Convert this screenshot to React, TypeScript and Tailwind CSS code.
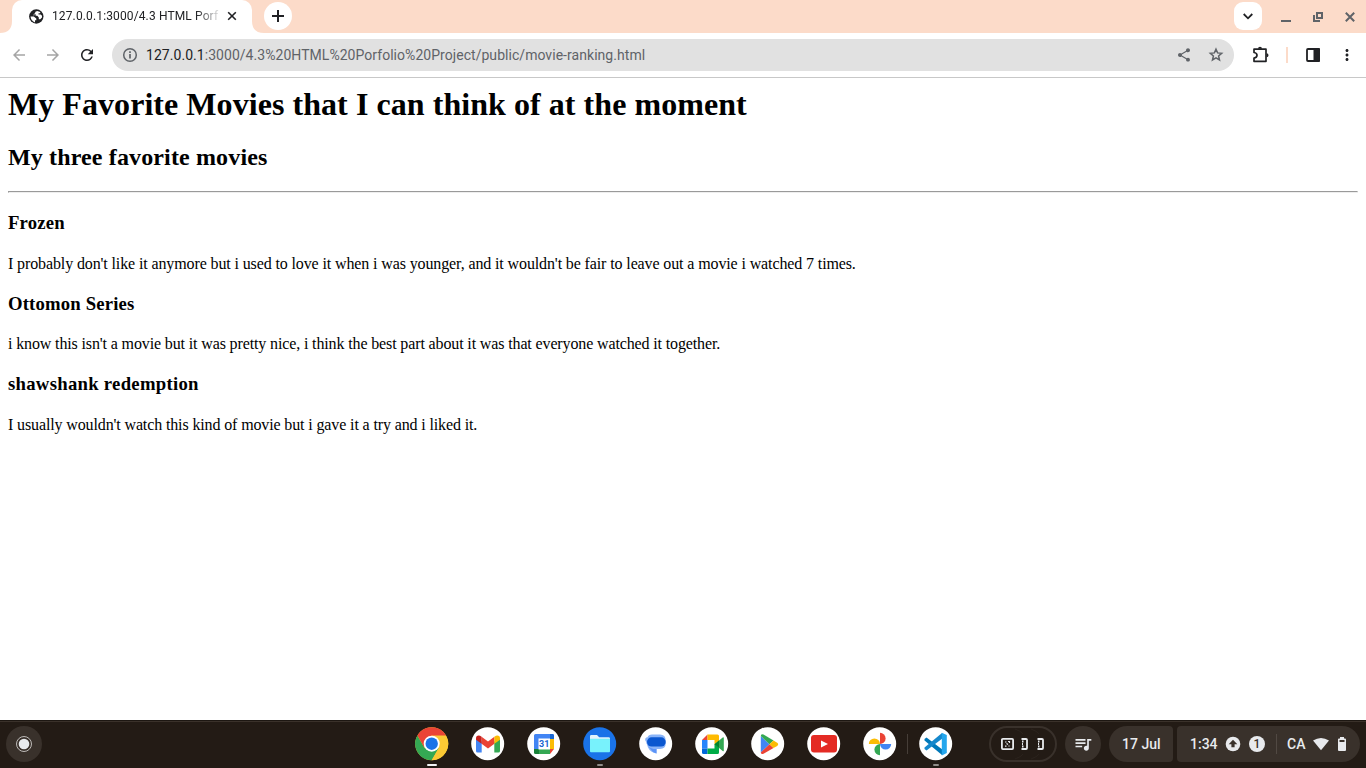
import React from "react";
import { MdArrowBack, MdArrowForward, MdRefresh, MdShare, MdMoreVert, MdQueueMusic } from "react-icons/md";

const Disc = ({ bg = "#fff", children }: { bg?: string; children: React.ReactNode }) => (
  <svg width="34" height="34" viewBox="0 0 34 34">
    <circle cx="16.700" cy="16.700" r="16.500" fill={bg} />
    {children}
  </svg>
);

const Chrome = () => (
  <Disc bg="#fbc934">
    <path d="M2.4 8.45A16.5 16.5 0 0 0 16.700 33.2L23.900 20.800 16.700 16.700 9.500 20.800Z" fill="#34a853" />
    <path d="M16.700 8.450H31A16.5 16.5 0 0 1 16.700 33.200L23.900 20.800Z" fill="#fbc934" />
    <path d="M2.4 8.450A16.5 16.5 0 0 1 31 8.450H16.700L9.500 20.800Z" fill="#ea4335" />
    <circle cx="16.700" cy="16.700" r="8" fill="#fff" />
    <circle cx="16.700" cy="16.700" r="6.200" fill="#1a73e8" />
  </Disc>
);

const Gmail = () => (
  <Disc>
    <path d="M5 12v12q0 1.6 1.6 1.6H10.700V14.500Z" fill="#4285f4" />
    <path d="M29 12v12q0 1.600-1.600 1.600H23.300V14.500Z" fill="#34a853" />
    <path d="M10.600 9.700 17 14.500l6.400-4.800v7.100L17 21.600l-6.400-4.800Z" fill="#ea4335" />
    <path d="M5 11.400q0-2.700 2.700-2.800 1.300 0 2.900 1.100v7.100L5 12.800Z" fill="#c5221f" />
    <path d="M29 11.400q0-2.700-2.700-2.800-1.300 0-2.900 1.100v7.100l5.600-4Z" fill="#fbbc04" />
  </Disc>
);

const Calendar = () => (
  <Disc>
    <path d="M7 8.500Q7 7 8.500 7H25.500Q27 7 27 8.500V12H12V23H7Z" fill="#4285f4" />
    <path d="M23 7h2.500Q27 7 27 8.500V12h-4Z" fill="#1967d2" />
    <path d="M23 12h4v10h-4Z" fill="#fbbc04" />
    <path d="M7 22h5v5H8.500Q7 27 7 25.500Z" fill="#188038" />
    <path d="M12 22h11v5H12Z" fill="#34a853" />
    <path d="M23 22h4l-4 5Z" fill="#ea4335" />
    <path d="M11.500 11.500H23V22.500H11.500Z" fill="#fff" />
    <text x="17.200" y="20.300" textAnchor="middle" fontFamily="Roboto, sans-serif" fontSize="9" fontWeight="700" fill="#1967d2">31</text>
  </Disc>
);

const Files = () => (
  <Disc bg="#1a73e8">
    <path d="M7 9.200Q7 8 8.200 8H14l2.200 2.200h9.300Q27 10.200 27 11.500V16H7Z" fill="#e2f5fc" />
    <path d="M7 11.800h20v12.400q0 1-1 1H8q-1 0-1-1Z" fill="#78f2fc" />
  </Disc>
);

const Messages = () => (
  <Disc>
    <path d="M13 7.500H21Q26.700 7.500 26.700 13.500v2.800Q26.700 22 21 22h-3.500v4.500q-6-.8-8.500-6L6.900 14Q5.500 10.300 8.500 10.200 9.500 7.500 13 7.500Z" fill="#8ab4f8" />
    <path d="M6.200 11Q5.700 12.200 8 17l3 4.500q2 3.500 6.500 5V22h-3Q8 21 6.200 11Z" fill="#5c94f8" />
    <rect x="8" y="10.300" width="18.700" height="9.200" rx="4.600" fill="#0b57d0" />
  </Disc>
);

const Meet = () => (
  <Disc>
    <path d="M7 13 12.500 7.500V13Z" fill="#ea4335" />
    <path d="M7 13h5.500v8.500H7Z" fill="#2684fc" />
    <path d="M7 21.500h5.500V27H8.500Q7 27 7 25.500Z" fill="#0066da" />
    <path d="M12.500 7.500H22.500Q24 7.500 24 9v5l-4.500 3.500V13h-7Z" fill="#ffba00" />
    <path d="M12.500 21.500h7V17L24 20.500v5Q24 27 22.500 27h-10Z" fill="#00ac47" />
    <path d="m19.500 17.200 8.200-6.700q1.100-.8 1.100.5v12.500q0 1.300-1.100.4Z" fill="#34a853" />
    <path d="m19.500 17.200 4.500-3.700v7.400Z" fill="#00832d" />
  </Disc>
);

const Play = () => (
  <Disc>
    <path d="M9.800 9v16.500L18.500 17.300Z" fill="#4285f4" />
    <path d="M9.800 9Q9.900 6.500 12.500 7.600L22.500 13.500 18.500 17.300Z" fill="#34a853" />
    <path d="M9.800 25.500Q10.200 27.800 12.500 26.800L22.500 21.100 18.500 17.300Z" fill="#ea4335" />
    <path d="m22.500 13.500 3.700 2.200q2 1.500 0 3.200l-3.700 2.200-4-3.800Z" fill="#fbbc04" />
  </Disc>
);

const YouTube = () => (
  <Disc>
    <rect x="4" y="8" width="26" height="17.500" rx="3" fill="#e42b24" />
    <path d="m14 13.500 7 3.500-7 3.500Z" fill="#fff" />
  </Disc>
);

const Photos = () => (
  <Disc>
    <path d="M17 17V5.800a5.600 5.600 0 0 1 0 11.200Z" fill="#ea4335" />
    <path d="M17 17h11.200a5.600 5.600 0 0 1-11.200 0Z" fill="#4285f4" />
    <path d="M17 17v11.200a5.600 5.600 0 0 1 0-11.200Z" fill="#34a853" />
    <path d="M17 17H5.800a5.600 5.600 0 0 1 11.200 0Z" fill="#fbbc04" />
  </Disc>
);

const Code = () => (
  <Disc>
    <path d="m5.500 12 2-1.600L23 22.200V28L5.500 13.500Z" fill="#0078b9" />
    <path d="m5.500 22 2 1.600L23 11.800V6L5.500 20.500Z" fill="#1688cc" />
    <path d="m22.800 5.800 5 2.300v17.800l-5 2.500Z" fill="#24a6ed" />
  </Disc>
);

const apps: { name: string; Icon: () => React.JSX.Element; mark?: "active" | "open" }[] = [
  { name: "Chrome", Icon: Chrome, mark: "active" },
  { name: "Gmail", Icon: Gmail },
  { name: "Calendar", Icon: Calendar },
  { name: "Files", Icon: Files, mark: "open" },
  { name: "Messages", Icon: Messages },
  { name: "Meet", Icon: Meet },
  { name: "Play", Icon: Play },
  { name: "YouTube", Icon: YouTube },
  { name: "Photos", Icon: Photos },
  { name: "Code", Icon: Code, mark: "open" },
];

const TabStrip = () => (
  <div className="flex h-[33px] bg-[#fcdbc9]">
    <svg width="12" height="33"><path d="M0 33Q12 33 12 21V33Z" fill="#fff" /></svg>
    <div className="flex w-[240px] items-center rounded-t-[10px] bg-white pl-4">
      <svg className="mb-px shrink-0" width="17" height="17" viewBox="0 0 17 17">
        <circle cx="8.300" cy="8.500" r="7.200" fill="#202124" />
        <path d="M9.200 2.900Q6.800 3.300 7 5.200L5.600 6.300v1.500h3.700l1.500 1.700v1.800h1.500L14 9.500V7.700l-1.300-1.200H10.500V5.200h1.700V4Z" fill="#fff" />
        <path d="M2.500 8.600H5.800L8.300 10.600v1.600H7v2.200Q3.200 13.400 2.500 8.600Z" fill="#fff" />
        <path d="M5.600 6.400h2.200v1.400H5.600Z" fill="#202124" />
      </svg>
      <div className="mb-px ml-[7px] w-[170px] text-xs tracking-[0.13px] whitespace-nowrap text-[#202124] [mask-image:linear-gradient(to_right,black_144px,transparent_170px)]">
        127.0.0.1:3000/4.3 HTML Porf
      </div>
      <svg className="mb-px ml-[5px]" width="10" height="10" viewBox="0 0 10 10"><path d="m1.200 1.200 7.600 7.600m0-7.600L1.200 8.800" stroke="#202124" strokeWidth="1.600" /></svg>
    </div>
    <svg width="12" height="33"><path d="M0 21Q0 33 12 33H0Z" fill="#fff" /></svg>
    <div className="mt-[2px] flex h-7 w-7 items-center justify-center rounded-full bg-white">
      <svg width="12" height="12"><path d="M6 0v12M0 6h12" stroke="#202124" strokeWidth="2" /></svg>
    </div>
    <div className="mt-[2px] ml-auto flex h-7 w-7 items-center justify-center rounded-[9px] bg-white">
      <svg width="10" height="7"><path d="m.7 1 4.300 4.300L9.300 1" fill="none" stroke="#202124" strokeWidth="1.800" /></svg>
    </div>
    <div className="ml-[19px] flex w-[85px] pt-[11px]">
      <svg width="74" height="12">
        <path d="M0 10h10" stroke="#5f6368" strokeWidth="2" />
        <path d="M36 2h5v5h-5ZM33 4v6h6" fill="none" stroke="#5f6368" strokeWidth="2" />
        <path d="m64.800 1.800 8.400 8.400m0-8.400-8.400 8.400" stroke="#5f6368" strokeWidth="2" />
      </svg>
    </div>
  </div>
);

const Toolbar = () => (
  <div className="flex h-[45px] items-center border-b border-[#c8c8c8] bg-white pl-[10px] text-[#202124]">
    <MdArrowBack className="h-[18px] w-[18px] text-[#a5a5a5]" />
    <MdArrowForward className="ml-4 h-[18px] w-[18px] text-[#a5a5a5]" />
    <MdRefresh className="ml-[16px] h-[18px] w-[18px]" />
    <div className="ml-4 flex h-8 w-[1122px] items-center rounded-full bg-[#e1e1e1] pr-[9px] pl-[9px] text-[#5f6368]">
      <svg width="18" height="18" viewBox="0 0 18 18">
        <circle cx="9" cy="9" r="6.300" fill="none" stroke="currentColor" strokeWidth="1.500" />
        <path d="M9 8v4.500M9 5.200v1.800" stroke="currentColor" strokeWidth="1.700" />
      </svg>
      <div className="ml-[7px] text-sm tracking-[0.045px]"><span className="text-[#202124]">127.0.0.1</span>:3000/4.3%20HTML%20Porfolio%20Project/public/movie-ranking.html</div>
      <MdShare className="ml-auto h-4 w-4" />
      <svg className="ml-[15px]" width="18" height="18" viewBox="0 0 18 18">
        <path d="m9 3.200 1.600 3.700 4.100.4-3.100 2.700.9 4L9 11.900 5.500 14l.9-4-3.100-2.700 4.100-.4Z" fill="none" stroke="currentColor" strokeWidth="1.500" />
      </svg>
    </div>
    <svg className="ml-[18px]" width="18" height="18" viewBox="0 0 18 18">
      <path d="M2 3.200H14V15.300H2V12Q5 11.500 5 9.200T2 6.500Z" fill="none" stroke="#202124" strokeWidth="1.700" strokeLinejoin="round" />
      <path d="M6 2.700a2 2 0 0 1 4 0ZM14.500 7.200a2 2 0 0 1 0 4Z" fill="#202124" />
    </svg>
    <div className="ml-4 h-4 w-[2px] bg-[#fcdbc9]" />
    <svg className="ml-[18px]" width="14" height="14"><rect x="1" y="1" width="12" height="12" rx="1" fill="none" stroke="#202124" strokeWidth="1.800" /><path d="M7.500 0H13q1 0 1 1v12q0 1-1 1H7.500Z" fill="#202124" /></svg>
    <MdMoreVert className="ml-[18px] h-[18px] w-[18px]" />
  </div>
);

const Shelf = () => (
  <footer className="flex h-12 bg-[#231b15] font-medium text-[#e8eaed] shadow-[inset_0_1px_#1d1712,inset_0_2px_#3a312a]">
    <div className="mt-[6px] ml-[6px] flex h-9 w-9 items-center justify-center rounded-full bg-[#39312b]">
      <svg width="18" height="18"><circle cx="9" cy="9" r="7.500" fill="none" stroke="#bdbab8" strokeWidth="1" /><circle cx="9" cy="9" r="5.300" fill="#e8eaed" /></svg>
    </div>
    <div className="ml-[362px] flex">
      {apps.map(({ name, Icon, mark }) => (
        <React.Fragment key={name}>
          {name === "Code" && <div className="-ml-px mt-[14px] h-5 w-px bg-[#463e38]" />}
          <div className="flex w-14 shrink-0 flex-col items-center pt-[7px] pr-px">
            <Icon />
            {mark === "active" && <div className="mt-[3px] h-[2px] w-[10px] rounded-full bg-[#f1f3f4]" />}
            {mark === "open" && <div className="mt-[3px] h-[2px] w-[6px] rounded-full bg-[#918d89]" />}
          </div>
        </React.Fragment>
      ))}
    </div>
    <div className="mt-[6px] mr-[6px] ml-auto flex h-9">
      <div className="flex w-[68px] items-center rounded-full border-2 border-[#39312b] pl-[9px]">
        <svg width="48" height="32" viewBox="0 -8 48 32" fill="none" stroke="#e8eaed" strokeWidth="1.800">
          <path d="M15 -7q6 2 8 5M15 23q6-2 8-5M31 -7q6 2 8 5M31 23q6-2 8-5" stroke="#2b231d" strokeWidth="1" />
          <rect x="1.900" y="2.900" width="11.200" height="10.200" rx="1" />
          <path d="M5 6H6.500M8 5.500h1.500v1.500M6.500 7.500l1.500 1M9 9.500v1M5 10.200H6.500" strokeWidth="1.200" />
          <path d="M21.500 3H26q1 0 1 1v8q0 1-1 1h-4.500M22 5.500h1.500M22 8h1M22 10.500h1.500M37.500 3H42q1 0 1 1v8q0 1-1 1h-4.500M38 5.500h1.500M38 8h1M38 10.500h1.500" strokeWidth="1.800" />
        </svg>
      </div>
      <div className="ml-2 flex w-9 items-center justify-center rounded-full bg-[#39312b]"><MdQueueMusic className="h-5 w-5" /></div>
      <div className="ml-2 flex w-16 items-center rounded-l-[18px] rounded-r-[4px] bg-[#39312b] pl-[13px] text-sm">17 Jul</div>
      <div className="ml-1 flex w-[183px] items-center rounded-l-[4px] rounded-r-[18px] bg-[#39312b] pl-[13px] text-sm">
        <span className="w-[28px]">1:34</span>
        <svg className="ml-[7px]" width="16" height="16"><circle cx="8" cy="8" r="7.300" fill="#e8eaed" /><path d="m8 3.700 4.300 4.500H9.600v3H6.400v-3H3.700Z" fill="#39312b" /></svg>
        <div className="ml-[8px] flex h-4 w-4 items-center justify-center rounded-full bg-[#e8eaed] text-xs text-[#39312b]">1</div>
        <div className="ml-[11px] h-5 w-px bg-[#514943]" />
        <span className="ml-[10px] w-[19px]">CA</span>
        <svg className="ml-[7px]" width="16" height="14"><path d="M0 3.500Q8-1.500 16 3.500L8 13.300Z" fill="#e8eaed" /></svg>
        <svg className="ml-[9px]" width="8" height="14"><path d="M2 0h4v1.500h1q1 0 1 1V13q0 1-1 1H1q-1 0-1-1V2.500q0-1 1-1h1Z" fill="#e8eaed" /><path d="M1.500 3h5v2h-5Z" fill="#39312b" /></svg>
      </div>
    </div>
  </footer>
);

export default function App() {
  return (
    <div className="flex h-screen w-full flex-col overflow-hidden bg-white font-[Roboto,sans-serif]">
      <TabStrip />
      <Toolbar />
      <main className="flex-1 px-2 pt-2 font-['Liberation_Serif',serif] text-black">
        <h1 className="text-[32px] leading-[37px] font-bold tracking-[0.055px]">My Favorite Movies that I can think of at the moment</h1>
        <h2 className="mt-[21px] text-2xl leading-[27px] font-bold tracking-[0.14px]">My three favorite movies</h2>
        <hr className="mt-5 h-[2px] border border-[#9a9a9a] border-r-[#eeeeee] border-b-[#eeeeee]" />
        <h3 className="mt-[19px] text-[18.72px] leading-[22px] font-bold tracking-[0.16px]">Frozen</h3>
        <p className="mt-[21px] text-base leading-[18px] tracking-[-0.118px]">I probably don't like it anymore but i used to love it when i was younger, and it wouldn't be fair to leave out a movie i watched 7 times.</p>
        <h3 className="mt-5 text-[18.72px] leading-[22px] font-bold tracking-[0.17px]">Ottomon Series</h3>
        <p className="mt-5 text-base leading-[18px] tracking-[-0.13px]">i know this isn't a movie but it was pretty nice, i think the best part about it was that everyone watched it together.</p>
        <h3 className="mt-5 text-[18.72px] leading-[22px] font-bold tracking-[0.28px]">shawshank redemption</h3>
        <p className="mt-[21px] text-base leading-[18px] tracking-[-0.127px]">I usually wouldn't watch this kind of movie but i gave it a try and i liked it.</p>
      </main>
      <Shelf />
    </div>
  );
}
